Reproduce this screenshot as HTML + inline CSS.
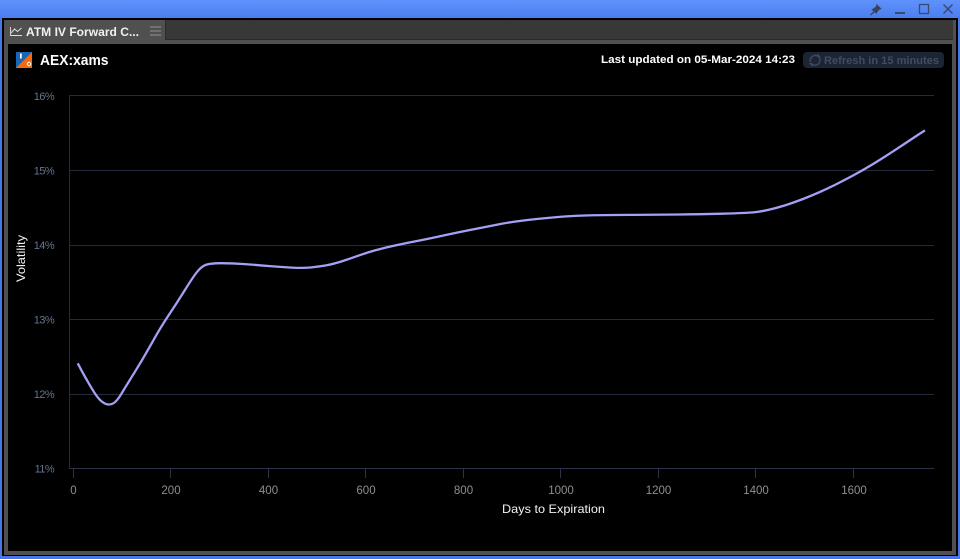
<!DOCTYPE html>
<html><head><meta charset="utf-8"><style>
html,body{margin:0;padding:0;background:#000}
#r{position:relative;width:960px;height:559px;overflow:hidden;background:#4678e8}
#r div{position:absolute}
svg{position:absolute;left:0;top:0}
text{font-family:"Liberation Sans",sans-serif}
</style></head><body><div id="r">
<div style="left:0;top:0;width:960px;height:18px;background:linear-gradient(#5f92fb,#4c7eee)"></div>
<div style="left:2px;top:18px;width:956px;height:538px;background:#000"></div>
<div style="left:4px;top:20px;width:952px;height:535px;background:#505050"></div>
<div style="left:165px;top:20px;width:787px;height:19px;background:#383838;border-left:1px solid #2a2a2a;border-bottom:1px solid #2a2a2a"></div>
<div style="left:8px;top:44px;width:944px;height:507px;background:#000"></div>
<svg width="960" height="559" viewBox="0 0 960 559">
<polygon points="876.500,4 881.800,9 879.500,9.500 877,12.500 876.500,14 871.500,9.500 873,8.800 876,6.500" fill="#39425a"/>
<path d="M874.500 11.500L870.500 15" stroke="#39425a" stroke-width="1.300"/>
<rect x="895" y="12" width="10" height="2" fill="#3a4a6e"/>
<rect x="919.500" y="4.500" width="9" height="9" fill="none" stroke="#3a4a6e" stroke-width="1.300"/>
<path d="M943.500 4.500l9 9M952.500 4.500l-9 9" stroke="#3a4a6e" stroke-width="1.500"/>
<path d="M10.500 27v8.500h11.500" fill="none" stroke="#ddd" stroke-width=".9"/>
<path d="M11 33l3.500-4 3 2.500 4-3.500" fill="none" stroke="#ddd" stroke-width="1"/>
<text x="26" y="36" font-size="12" font-weight="700" fill="#f0f0f0" textLength="113" lengthAdjust="spacingAndGlyphs">ATM IV Forward C...</text>
<path d="M150 27h11M150 31h11M150 35h11" stroke="#7c7c7c" stroke-width="1.500"/>
<rect x="16" y="52" width="16" height="16" fill="#1a66b5"/>
<path d="M32 52v16h-16z" fill="#f26a10"/>
<rect x="20" y="53.500" width="1.700" height="5" fill="#fff"/>
<circle cx="29" cy="64" r="1.700" fill="none" stroke="#fff" stroke-width="1"/>
<text x="40" y="65" font-size="14.500" font-weight="700" fill="#fff" textLength="68.500" lengthAdjust="spacingAndGlyphs">AEX:xams</text>
<text x="601" y="63" font-size="11" font-weight="700" fill="#fff" textLength="194" lengthAdjust="spacingAndGlyphs">Last updated on 05-Mar-2024 14:23</text>
<rect x="803" y="52" width="141" height="16" rx="4" fill="#1c2534"/>
<path d="M810.500 62a5 5 0 0 1 7-6M819.500 58a5 5 0 0 1-7 6.500" fill="none" stroke="#3e4b60" stroke-width="1.400"/>
<path d="M817.500 53.500v4h3.500zM812.500 67v-4h-3.500z" fill="#3e4b60"/>
<text x="824" y="64" font-size="11" font-weight="700" fill="#3f4c62" textLength="115" lengthAdjust="spacingAndGlyphs">Refresh in 15 minutes</text>
<g stroke="#232a39" stroke-width="1" fill="none">
<path d="M69 95.500H934M69 170.500H934M69 245.500H934M69 319.500H934M69 394.500H934"/>
<path d="M69.500 95V468.500"/>
<path d="M69 468.500H934" stroke="#2a3345"/>
<path d="M73.500 469v9M170.500 469v9M268.500 469v9M365.500 469v9M463.500 469v9M560.500 469v9M658.500 469v9M755.500 469v9M853.500 469v9" stroke="#2a3345"/>
</g>
<g font-size="11" fill="#63758e" text-anchor="end" letter-spacing="-.6">
<text x="54" y="100">16%</text><text x="54" y="174.500">15%</text><text x="54" y="249">14%</text><text x="54" y="323.500">13%</text><text x="54" y="398">12%</text><text x="54" y="472.500">11%</text>
</g>
<g font-size="11.500" fill="#8f8f8f" text-anchor="middle">
<text x="73.500" y="494">0</text><text x="171" y="494">200</text><text x="268.500" y="494">400</text><text x="366" y="494">600</text><text x="463.500" y="494">800</text><text x="561" y="494">1000</text><text x="658.500" y="494">1200</text><text x="756" y="494">1400</text><text x="854" y="494">1600</text>
</g>
<text x="502" y="513" font-size="12" fill="#f2f2f2" textLength="103" lengthAdjust="spacingAndGlyphs">Days to Expiration</text>
<text transform="translate(25,282) rotate(-90)" font-size="12" fill="#f2f2f2" textLength="47" lengthAdjust="spacingAndGlyphs">Volatility</text>
<path fill="none" stroke="#a3a0f5" stroke-width="2.300" stroke-linejoin="round" d="M77.700 363.300L82.200 371.700Q86.700 380 91.700 388.300Q96.700 396.700 100 399.900Q103.300 403 106.300 404.100Q109.300 405.200 113 403.500Q116.700 401.700 121.700 393.300Q126.700 385 135 371.700Q143.300 358.300 151.700 343.300Q160 328.300 168.300 315.800Q176.700 303.300 185 289.900Q193.300 276.500 197.200 271.800Q201 267 205 265.200Q209 263.300 221 263.200Q233 263.200 244.800 264.100Q256.700 265 268.300 266Q280 267 291.700 267.600Q303.300 268.200 311.700 267.400Q320 266.500 326.700 265.300Q333.300 264 341.700 261.400Q350 258.700 358.300 255.700Q366.700 252.700 375 250.400Q383.300 248 395 245.500Q406.700 243 418.300 240.800Q430 238.500 441.700 235.900Q453.300 233.300 470 230Q486.700 226.700 496.700 224.700Q506.700 222.700 516.700 221.400Q526.700 220 536.700 219Q546.700 218 558.300 217Q570 216 585 215.500Q600 215 630 214.900Q660 214.700 680 214.500Q700 214.300 723 213.700Q746.700 213 753.300 212.400Q760 211.700 768.300 209.900Q776.700 208 785 205.400Q793.300 202.700 801.700 199.500Q810 196.300 818.300 192.700Q826.700 189 835 184.900Q843.300 180.700 853.300 175.400Q863.300 170 873.300 163.900Q883.300 157.700 893.300 151.200Q903.300 144.700 914 137.500L925 130.300"/>
</svg>
</div></body></html>
